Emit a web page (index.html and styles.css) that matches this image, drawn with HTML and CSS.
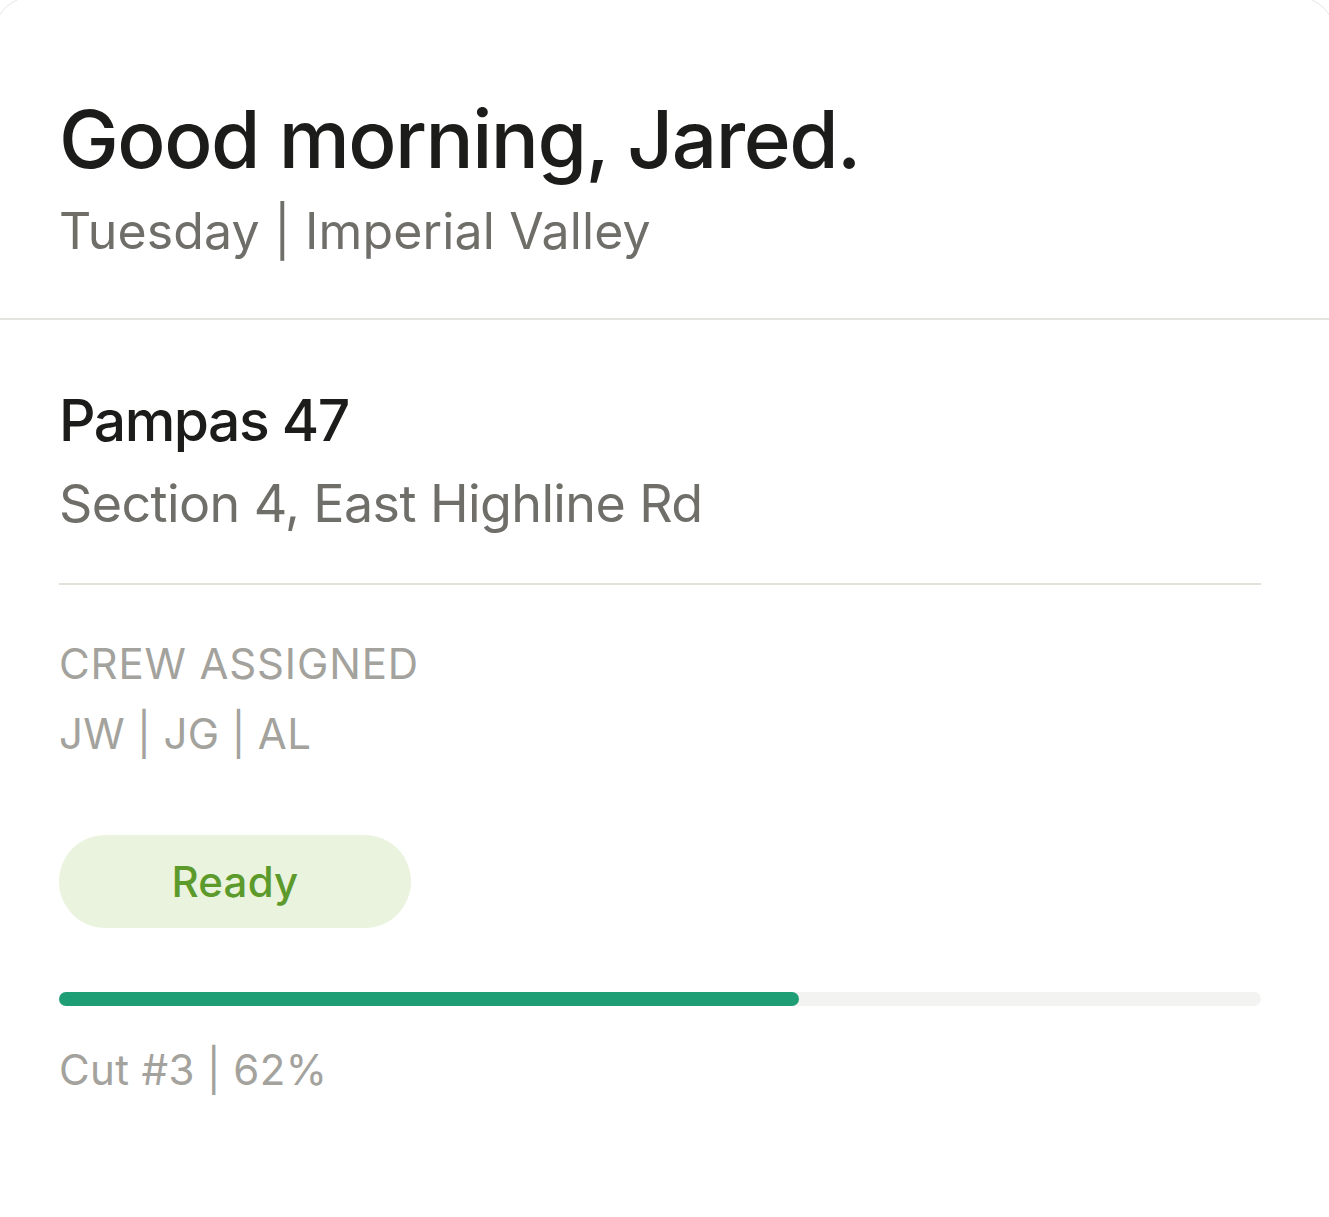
FILE: index.html
```html
<!DOCTYPE html>
<html lang="en">
<head>
<meta charset="utf-8">
<title>Dashboard</title>
<link rel="stylesheet" href="styles.css">
</head>
<body>
<div class="card">
  <header class="greet">
    <h1 class="greet-title">Good morning, Jared.</h1>
    <p class="greet-sub">Tuesday | Imperial Valley</p>
  </header>
  <section class="field">
    <h2 class="field-name">Pampas 47</h2>
    <p class="field-loc">Section 4, East Highline Rd</p>
    <hr class="divider">
    <p class="label">CREW ASSIGNED</p>
    <p class="crew">JW | JG | AL</p>
    <div class="pill">Ready</div>
    <div class="track"><div class="fill" style="width:61.6%"></div></div>
    <p class="meta">Cut #3 | 62%</p>
  </section>
</div>
</body>
</html>
```
FILE: styles.css
```css
html, body {
  margin: 0;
  padding: 0;
  background: #ffffff;
  overflow: hidden;
}
body {
  font-family: Inter, "Noto Sans", sans-serif;
  height: 1217px;
}
.card {
  width: 1343px;
  margin: -4px 0 0 -7px;
  height: 1260px;
  border: 1px solid #e6e6e2;
  border-radius: 40px;
  box-sizing: border-box;
  background: #fff;
}
.greet {
  padding: 94px 74px 57px 65px;
  border-bottom: 2px solid #e3e3df;
}
.greet-title {
  margin: 0;
  font-size: 80px;
  line-height: 96px;
  font-weight: 500;
  color: #1c1c1a;
  letter-spacing: -1.5px;
}
.greet-sub {
  margin: 14px 0 0;
  font-size: 50px;
  line-height: 60px;
  font-weight: 400;
  color: #6f6e69;
  letter-spacing: 0.15px;
}
.field {
  padding: 67px 74px 0 65px;
}
.field-name {
  margin: 0;
  font-size: 57px;
  line-height: 68px;
  font-weight: 500;
  color: #1c1c1a;
  letter-spacing: -1.5px;
}
.field-loc {
  margin: 18px 0 0;
  font-size: 52px;
  line-height: 62px;
  font-weight: 400;
  color: #6f6e69;
  letter-spacing: -0.6px;
}
.divider {
  margin: 48px 0 0;
  border: 0;
  height: 2px;
  background: #e2e1da;
}
.label {
  margin: 54px 0 0;
  font-size: 42px;
  line-height: 50px;
  color: #a3a29d;
  letter-spacing: 0.85px;
}
.crew {
  margin: 20px 0 0;
  font-size: 42px;
  line-height: 50px;
  color: #a3a29d;
  letter-spacing: 0.3px;
}
.pill {
  margin-top: 76px;
  width: 352px;
  height: 93px;
  border-radius: 47px;
  background: #eaf3de;
  color: #5c9a2b;
  font-size: 42px;
  line-height: 93px;
  font-weight: 500;
  text-align: center;
  letter-spacing: 0.2px;
}
.track {
  margin-top: 64px;
  height: 14px;
  border-radius: 7px;
  background: #f3f3f1;
}
.fill {
  height: 100%;
  border-radius: 7px;
  background: #1f9e76;
}
.meta {
  margin: 39px 0 0;
  font-size: 42px;
  line-height: 50px;
  color: #a3a29d;
  letter-spacing: 0.35px;
}
```
